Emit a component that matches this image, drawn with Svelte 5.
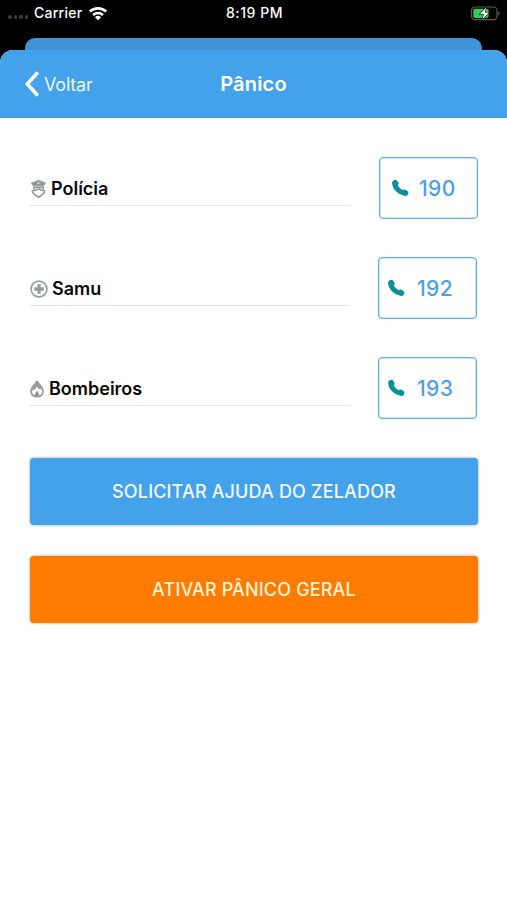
<script lang="ts">
  type Contact = { id: string; name: string; phone: string };

  const contacts: Contact[] = [
    { id: 'police', name: 'Polícia', phone: '190' },
    { id: 'samu', name: 'Samu', phone: '192' },
    { id: 'fire', name: 'Bombeiros', phone: '193' }
  ];
</script>

<div class="screen">
  <div class="status-bar">
    <div class="status-left">
      <span class="signal"><i></i><i></i><i></i><i></i></span>
      <span class="carrier">Carrier</span>
      <svg class="wifi" width="20" height="15" viewBox="0 0 20 15" fill="none">
        <path d="M1.8 5.6a12 12 0 0 1 16.4 0" stroke="#fff" stroke-width="2.7" />
        <path d="M5 9a7.3 7.3 0 0 1 10 0" stroke="#fff" stroke-width="2.5" />
        <path d="M10 14.3 7 11.2a4.3 4.3 0 0 1 6 0z" fill="#fff" />
      </svg>
    </div>
    <span class="time">8:19 PM</span>
    <svg class="battery" width="31" height="15" viewBox="0 0 31 15">
      <rect x="1.5" y="1" width="25.5" height="12.6" rx="3.6" fill="none" stroke="#5c5c5c" stroke-width="1.2" />
      <path d="M28.3 5.1c1.8.8 1.8 3.6 0 4.4z" fill="#5c5c5c" />
      <rect x="3.3" y="2.7" width="15.3" height="9.2" rx="2" fill="#35cb5b" />
      <path d="M16.2 1.4 10 8h4l-1.7 5.4L19 6.5h-4.2z" fill="#fff" stroke="#000" stroke-width="1.1" paint-order="stroke" />
    </svg>
  </div>

  <div class="back-card"></div>

  <div class="card">
    <header class="navbar">
      <button class="back" type="button">
        <svg width="14" height="26" viewBox="0 0 14 26" fill="none">
          <path d="M11.8 2.5 2.3 13l9.5 10.5" stroke="#fff" stroke-width="3.6" stroke-linecap="round" stroke-linejoin="round" />
        </svg>
        <span>Voltar</span>
      </button>
      <h1>Pânico</h1>
    </header>

    <main>
      {#each contacts as contact}
        <div class="row">
          <div class="label {contact.id}">
            {#if contact.id === 'police'}
              <svg width="17" height="20" viewBox="0 0 17 20" fill="none">
                <path d="M8.5.8 16.2 4l-2.6 3.2H3.400L.8 4z" fill="#929d9a" />
                <circle cx="8.5" cy="4.2" r="1" fill="#e0e4e3" />
                <path d="M3 8.300h11" stroke="#929d9a" stroke-width="1.7" />
                <path d="M2.200 11c0 1.700.7 3.200 2.200 4.400l4.100 2.900 4.100-2.900c1.500-1.200 2.200-2.700 2.200-4.400" stroke="#929d9a" stroke-width="1.7" stroke-linejoin="round" />
                <path d="M3.800 9v2.300c2.200.6 3-1.200 4.700-1.200s2.500 1.800 4.700 1.200V9" stroke="#929d9a" stroke-width="1.500" />
              </svg>
            {:else if contact.id === 'samu'}
              <svg width="18" height="18" viewBox="0 0 18 18" fill="none">
                <circle cx="9" cy="9" r="7.9" stroke="#929d9a" stroke-width="1.6" />
                <path d="M9 4.3v9.4M4.3 9h9.4" stroke="#929d9a" stroke-width="3.3" />
              </svg>
            {:else}
              <svg width="14" height="18" viewBox="0 0 14 18" fill="none">
                <path d="M7 1.500c1.800 3.200 5.900 5.700 5.900 9.700 0 3.400-2.500 5.500-5.900 5.500s-5.900-2.100-5.900-5.500c0-4 4.100-6.500 5.900-9.700z" stroke="#929d9a" stroke-width="1.8" stroke-linejoin="round" />
                <path d="M7 2 2.800 8c-.6.900-1 1.600-1 2.600C3.500 10.200 6 9 6.800 6.500 8 8.500 9.500 9.600 11.800 9z" fill="#929d9a" />
                <path d="M7 10.500 9.200 14c.3.900 0 2-.7 2.600h-3c-.7-.6-1-1.700-.7-2.600z" fill="#929d9a" />
              </svg>
            {/if}
            <span>{contact.name}</span>
          </div>
          <button class="call {contact.id}" type="button">
            <svg width="18" height="18" viewBox="0 0 18 18" fill="none" stroke="#078f9e" stroke-linecap="round">
              <path d="M3.700 4.300c.3 4.500 5 9.300 10.200 10" stroke-width="5" />
              <path d="M4.200 3.500l.7 1M13.500 13.200l1.200.8" stroke-width="5.200" />
            </svg>
            <span>{contact.phone}</span>
          </button>
        </div>
      {/each}

      <button class="action help" type="button"><span>SOLICITAR AJUDA DO ZELADOR</span></button>
      <button class="action panic" type="button"><span>ATIVAR PÂNICO GERAL</span></button>
    </main>
  </div>
</div>

<style>
  :global(body) {
    margin: 0;
    background: #000;
  }
  .screen {
    display: flex;
    flex-direction: column;
    height: 900px;
    overflow: hidden;
    background: #000;
    color: #080808;
    font-family: Inter, "Liberation Sans", sans-serif;
  }
  button {
    padding: 0;
    border: none;
    background: none;
    font: inherit;
    cursor: pointer;
  }
  svg {
    display: block;
    flex: none;
  }
  .status-bar {
    display: grid;
    grid-template-columns: 1fr auto 1fr;
    align-items: center;
    height: 26px;
    padding: 0 6px 0 8px;
    color: #fff;
    font-size: 14px;
    font-weight: 500;
    line-height: 26px;
  }
  .status-left {
    display: flex;
    align-items: center;
  }
  .signal {
    display: flex;
    gap: 2px;
    width: 26px;
    padding-top: 8px;
  }
  .signal i {
    width: 3.5px;
    height: 3.5px;
    border-radius: 50%;
    background: #3c3c3c;
  }
  .carrier {
    width: 54px;
    letter-spacing: 0.25px;
  }
  .time {
    letter-spacing: 0.55px;
  }
  .battery {
    justify-self: end;
  }
  .back-card {
    flex: none;
    height: 12px;
    margin: 12px 25px 0;
    border-radius: 10px 10px 0 0;
    background: #3f94d6;
  }
  .card {
    flex: 1;
    border-radius: 13px 13px 0 0;
    overflow: hidden;
    background: #fff;
  }
  .navbar {
    display: grid;
    grid-template-columns: 1fr auto 1fr;
    align-items: center;
    height: 68px;
    padding: 0 25px;
    background: #44a2eb;
    color: #fff;
  }
  .back {
    display: flex;
    align-items: center;
    gap: 5px;
    color: #e9f6ff;
    font-size: 18px;
    letter-spacing: -0.2px;
  }
  h1 {
    margin: 0;
    font-size: 20px;
    font-weight: 600;
    letter-spacing: 0.2px;
  }
  main {
    padding: 39px 29px 0 30px;
  }
  .row {
    display: flex;
    justify-content: space-between;
    height: 61px;
    margin-bottom: 39px;
  }
  .label {
    display: flex;
    align-items: center;
    box-sizing: border-box;
    width: 320px;
    height: 49px;
    padding-top: 14px;
    border-bottom: 1px solid #e2e7e8;
    font-size: 18px;
    font-weight: 600;
  }
  .label svg {
    margin-top: 2px;
  }
  .label span {
    margin-left: 4px;
  }
  .label.fire span {
    margin-left: 5px;
  }
  .call {
    display: flex;
    align-items: center;
    gap: 10px;
    box-sizing: border-box;
    width: 99px;
    height: 62px;
    padding-left: 11px;
    border: 1px solid #5faae8;
    border-radius: 4px;
    box-shadow: inset 0 0 0 0.5px #9bcbf2;
    color: #4ba0e6;
    font-size: 21px;
    font-weight: 500;
    letter-spacing: 0.4px;
  }
  .call.samu,
  .call.fire {
    margin-right: 1px;
    padding-left: 8px;
    gap: 12px;
  }
  .action {
    display: block;
    width: 448px;
    height: 67px;
    margin-bottom: 31px;
    border-radius: 4px;
    box-shadow: 0 0 3px rgba(0, 0, 0, 0.4);
    color: #f2faff;
    font-size: 18px;
    font-weight: 500;
    letter-spacing: 0.16px;
  }
  .help {
    margin-top: 40px;
    background: #44a2eb;
  }
  .panic {
    background: #ff7c00;
    color: #fff3dc;
  }
</style>
